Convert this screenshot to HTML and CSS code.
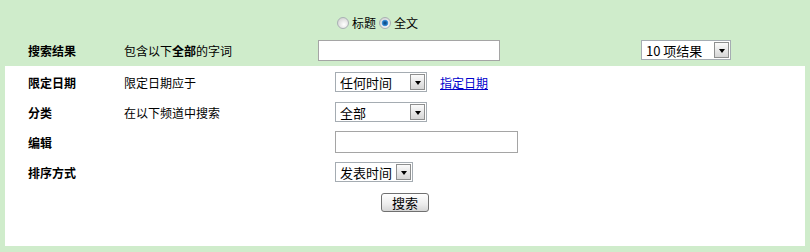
FILE: index.html
```html
<!DOCTYPE html>
<html lang="zh">
<head>
<meta charset="utf-8">
<title>高级搜索</title>
<link rel="stylesheet" href="styles.css">
</head>
<body>
<form class="page">
  <div class="top">
    <div class="scope">
      <label class="radio"><input type="radio" name="scope"><span>标题</span></label>
      <label class="radio"><input type="radio" name="scope" checked><span>全文</span></label>
    </div>
    <div class="main-row">
      <span class="label">搜索结果</span>
      <span class="desc">包含以下<b>全部</b>的字词</span>
      <input class="text q" type="text">
      <span class="sel w90"><select><option>10 项结果</option></select><span class="arr"></span></span>
    </div>
  </div>
  <div class="panel">
    <div class="row">
      <span class="label">限定日期</span>
      <span class="desc">限定日期应于</span>
      <span class="ctl"><span class="sel w92"><select><option>任何时间</option></select><span class="arr"></span></span><a class="link" href="#">指定日期</a></span>
    </div>
    <div class="row">
      <span class="label">分类</span>
      <span class="desc">在以下频道中搜索</span>
      <span class="ctl"><span class="sel w92"><select><option>全部</option></select><span class="arr"></span></span></span>
    </div>
    <div class="row">
      <span class="label">编辑</span>
      <span class="desc"></span>
      <span class="ctl"><input class="text ed" type="text"></span>
    </div>
    <div class="row">
      <span class="label">排序方式</span>
      <span class="desc"></span>
      <span class="ctl"><span class="sel w78"><select><option>发表时间</option></select><span class="arr"></span></span></span>
    </div>
    <div class="row center">
      <button type="button" class="btn">搜索</button>
    </div>
  </div>
</form>
</body>
</html>
```

FILE: styles.css
```css
html, body {
  margin: 0;
  padding: 0;
}
body {
  background: #cfeccb;
  font-family: "Noto Sans CJK SC", "Liberation Sans", sans-serif;
  font-size: 12px;
  color: #000;
}
.page {
  display: flex;
  flex-direction: column;
  width: 810px;
  height: 252px;
}
.top {
  height: 66px;
  display: flex;
  flex-direction: column;
}
.scope {
  display: flex;
  align-items: center;
  padding-left: 337px;
  height: 20px;
  margin-top: 13px;
  gap: 3px;
}
.radio {
  display: flex;
  align-items: center;
  gap: 3px;
  line-height: 14px;
}
.radio input {
  appearance: none;
  -webkit-appearance: none;
  margin: 0;
  width: 12px;
  height: 12px;
  border-radius: 50%;
  border: 1px solid #a9b0b4;
  background: radial-gradient(circle at 60% 65%, #ffffff 0%, #e2e2e2 55%, #c8c8c8 100%);
  box-sizing: border-box;
}
.radio input:checked {
  background:
    radial-gradient(circle at 50% 50%, #0a3f73 0, #1f6fb8 2px, #5aa8e6 3.2px, transparent 3.6px),
    radial-gradient(circle at 60% 65%, #ffffff 0%, #e2e2e2 55%, #c8c8c8 100%);
}
.main-row {
  display: flex;
  align-items: center;
  height: 22px;
  margin-top: 6px;
}
.label {
  font-weight: bold;
  width: 96px;
  padding-left: 28px;
  flex: none;
}
.main-row .desc {
  width: 194px;
  flex: none;
}
.main-row .desc b {
  font-weight: bold;
}
.text {
  box-sizing: border-box;
  border: 1px solid #a5a5a5;
  background: #fff;
  margin: 0;
  padding: 0 3px;
  font: inherit;
}
.q {
  width: 182px;
  height: 21px;
  margin-right: 141px;
}
.ed {
  width: 183px;
  height: 22px;
}
.sel {
  box-sizing: border-box;
  display: inline-flex;
  align-items: stretch;
  height: 20px;
  border: 1px solid #a5acb2;
  background: #fff;
}
.sel select {
  appearance: none;
  -webkit-appearance: none;
  border: 0;
  outline: 0;
  background: transparent;
  font: inherit;
  font-size: 13px;
  color: #000;
  padding: 0 0 0 4px;
  margin: 0;
  flex: 1;
  min-width: 0;
}
.arr {
  flex: none;
  width: 15px;
  margin: 1px;
  box-sizing: border-box;
  border: 1px solid #8e8f8f;
  background: linear-gradient(#fbfbfb, #d6d6d6);
  display: flex;
  align-items: center;
  justify-content: center;
}
.arr::after {
  content: "";
  border-left: 3.5px solid transparent;
  border-right: 3.5px solid transparent;
  border-top: 4px solid #000;
  margin-top: 1px;
}
.w90 { width: 90px; }
.w92 { width: 92px; }
.w78 { width: 78px; }
.panel {
  background: #fff;
  margin: 0 5px 6px;
  height: 180px;
  padding-top: 1px;
  box-sizing: border-box;
  display: flex;
  flex-direction: column;
}
.row {
  height: 30px;
  display: flex;
  align-items: center;
}
.row .label {
  padding-left: 23px;
}
.row .desc {
  width: 211px;
  flex: none;
}
.ctl {
  display: flex;
  align-items: center;
}
.link {
  color: #0000cc;
  text-decoration: underline;
  margin-left: 13px;
}
.center {
  justify-content: center;
}
.btn {
  width: 48px;
  height: 19px;
  box-sizing: border-box;
  margin: 0;
  padding: 0;
  font: inherit;
  font-size: 13px;
  line-height: 15px;
  color: #000;
  border: 1px solid #707070;
  border-radius: 3px;
  background: linear-gradient(#ffffff, #ececec 60%, #d6d6d6);
}
```
